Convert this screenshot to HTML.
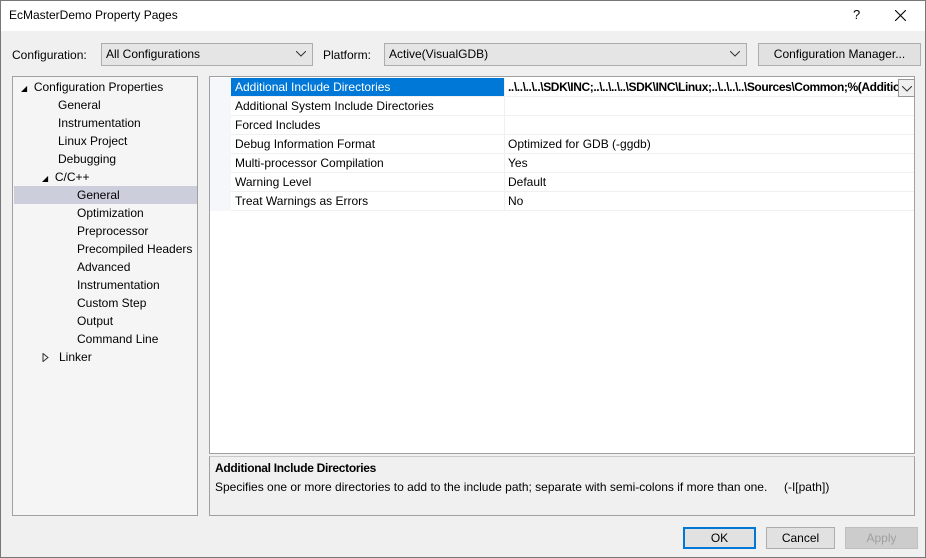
<!DOCTYPE html>
<html><head><style>
*{margin:0;padding:0;box-sizing:border-box}
body{width:926px;height:558px;overflow:hidden;background:#f0f0f0;font-family:"Liberation Sans",sans-serif;font-size:12px;color:#000;position:relative}
.a{position:absolute;white-space:nowrap}
.combo{position:absolute;background:#e5e5e5;border:1px solid #adadad;height:23px;line-height:21px;padding-left:4px}
.btn{position:absolute;background:#e1e1e1;border:1px solid #adadad;height:22px;line-height:20px;text-align:center}
.chev{position:absolute;right:6px;top:7px}
.tr{position:absolute;left:1px;width:183px;height:18px;line-height:18px}
.row{position:absolute;left:21px;width:683px;height:19px;line-height:18px;border-bottom:1px solid #f0f0f0}
.row .n{position:absolute;left:4px}
.row .v{position:absolute;left:273px;border-left:1px solid #f0f0f0;height:19px;padding-left:3px;top:0;width:410px}
</style></head><body>
<div class="a" style="left:0;top:0;width:926px;height:31px;background:#fff"></div>
<div class="a" style="left:0;top:0;width:926px;height:558px;border:1px solid #777"></div>
<div class="a" style="left:9px;top:8px;font-size:12px">EcMasterDemo Property Pages</div>
<div class="a" style="left:853px;top:7px;font-size:13px">?</div>
<svg class="a" style="left:895px;top:10px" width="11" height="11"><path d="M0 0L11 11M11 0L0 11" stroke="#000" stroke-width="1.1"/></svg>

<div class="a" style="left:12px;top:48px">Configuration:</div>
<div class="combo" style="left:101px;top:43px;width:212px">All Configurations<svg class="chev" width="10" height="6"><path d="M0 0L5 5L10 0" stroke="#333" fill="none"/></svg></div>
<div class="a" style="left:323px;top:48px">Platform:</div>
<div class="combo" style="left:384px;top:43px;width:363px">Active(VisualGDB)<svg class="chev" width="10" height="6"><path d="M0 0L5 5L10 0" stroke="#333" fill="none"/></svg></div>
<div class="btn" style="left:758px;top:43px;width:163px;height:23px">Configuration Manager...</div>

<div class="a" style="left:12px;top:76px;width:186px;height:440px;background:#f5f5f5;border:1px solid #a0a0a0">
<div class="tr" style="top:1px;left:8px"><span style="font-size:8px">&#9698;</span>&nbsp; Configuration Properties</div>
<div class="tr" style="top:19px;padding-left:44px">General</div>
<div class="tr" style="top:37px;padding-left:44px">Instrumentation</div>
<div class="tr" style="top:55px;padding-left:44px">Linux Project</div>
<div class="tr" style="top:73px;padding-left:44px">Debugging</div>
<div class="tr" style="top:91px;padding-left:28px"><span style="font-size:8px">&#9698;</span>&nbsp; C/C++</div>
<div class="tr" style="top:109px;padding-left:63px;background:#cccedb">General</div>
<div class="tr" style="top:127px;padding-left:63px">Optimization</div>
<div class="tr" style="top:145px;padding-left:63px">Preprocessor</div>
<div class="tr" style="top:163px;padding-left:63px">Precompiled Headers</div>
<div class="tr" style="top:181px;padding-left:63px">Advanced</div>
<div class="tr" style="top:199px;padding-left:63px">Instrumentation</div>
<div class="tr" style="top:217px;padding-left:63px">Custom Step</div>
<div class="tr" style="top:235px;padding-left:63px">Output</div>
<div class="tr" style="top:253px;padding-left:63px">Command Line</div>
<div class="tr" style="top:271px;padding-left:28px"><svg width="7" height="9" style="vertical-align:-1px"><path d="M1 0.5L6 4.5L1 8.5Z" fill="none" stroke="#333"/></svg>&nbsp;&nbsp; Linker</div>
</div>

<div class="a" style="left:209px;top:76px;width:706px;height:378px;background:#fff;border:1px solid #a0a0a0">
<div class="a" style="left:0;top:1px;width:21px;height:133px;background:#f5f7fb"></div>
<div class="row" style="top:1px"><div class="a" style="left:0;top:0;width:273px;height:18px;background:#0078d7"></div><span class="n" style="color:#fff">Additional Include Directories</span><div class="v" style="font-weight:bold;letter-spacing:-0.4px;overflow:hidden;width:394px">..\..\..\..\SDK\INC;..\..\..\..\SDK\INC\Linux;..\..\..\..\Sources\Common;%(AdditionalIncludeDirectories)</div><div class="a" style="left:667px;top:1px;width:17px;height:18px;border:1px solid #999;background:#f0f0f0"><svg style="position:absolute;left:3px;top:6px" width="10" height="6"><path d="M0 0L5 5L10 0" stroke="#333" fill="none"/></svg></div></div>
<div class="row" style="top:20px"><span class="n">Additional System Include Directories</span><div class="v"></div></div>
<div class="row" style="top:39px"><span class="n">Forced Includes</span><div class="v"></div></div>
<div class="row" style="top:58px"><span class="n">Debug Information Format</span><div class="v">Optimized for GDB (-ggdb)</div></div>
<div class="row" style="top:77px"><span class="n">Multi-processor Compilation</span><div class="v">Yes</div></div>
<div class="row" style="top:96px"><span class="n">Warning Level</span><div class="v">Default</div></div>
<div class="row" style="top:115px"><span class="n">Treat Warnings as Errors</span><div class="v">No</div></div>
</div>

<div class="a" style="left:209px;top:456px;width:706px;height:60px;border:1px solid #a0a0a0;border-top-color:#c8c8c8">
<div class="a" style="left:5px;top:4px;font-weight:bold;letter-spacing:-0.3px">Additional Include Directories</div>
<div class="a" style="left:5px;top:23px">Specifies one or more directories to add to the include path; separate with semi-colons if more than one.&nbsp;&nbsp;&nbsp;&nbsp; (-I[path])</div>
</div>

<div class="btn" style="left:683px;top:527px;width:73px;border:2px solid #0078d7;line-height:18px">OK</div>
<div class="btn" style="left:766px;top:527px;width:69px">Cancel</div>
<div class="btn" style="left:845px;top:527px;width:73px;color:#a0a0a0;background:#ccc;border-color:#bfbfbf">Apply</div>
</body></html>
